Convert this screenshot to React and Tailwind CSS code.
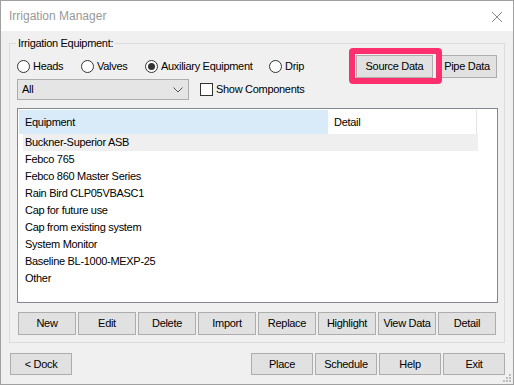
import React from 'react';

const Btn = ({ children, className = '' }) => (
  <button className={`flex items-center justify-center border border-[#adadad] bg-[#e1e1e1] text-black ${className}`}>
    {children}
  </button>
);

const Radio = ({ label, checked, className = '' }) => (
  <label className={`flex items-center ${className}`}>
    <span className="w-[13px] h-[13px] rounded-full border border-[#333] bg-white flex items-center justify-center">
      {checked && <span className="w-[7px] h-[7px] rounded-full bg-[#333]" />}
    </span>
    <span className="ml-[3px]">{label}</span>
  </label>
);

const rows = [
  'Buckner-Superior ASB',
  'Febco 765',
  'Febco 860 Master Series',
  'Rain Bird CLP05VBASC1',
  'Cap for future use',
  'Cap from existing system',
  'System Monitor',
  'Baseline BL-1000-MEXP-25',
  'Other',
];

const actions = ['New', 'Edit', 'Delete', 'Import', 'Replace', 'Highlight', 'View Data', 'Detail'];

export default function App() {
  return (
    <div className="w-[514px] h-[385px] border border-[#a0a0a0] bg-[#f0f0f0] flex flex-col relative font-['Liberation_Sans',Arial,sans-serif] text-[11px] tracking-[-0.3px] text-black">
      {/* title bar */}
      <div className="h-[30px] bg-white flex items-center justify-between pl-[8px] pr-[10px]">
        <span className="text-[12px] tracking-normal text-[#999]">Irrigation Manager</span>
        <svg width="12" height="12" viewBox="0 0 12 12" className="mt-[1px]">
          <path d="M1 1 L11 11 M11 1 L1 11" stroke="#8a8a8a" strokeWidth="1" />
        </svg>
      </div>

      {/* group box */}
      <div className="mt-[12px] ml-[8px] w-[496px] h-[300px] border border-[#dcdcdc] relative">
        <span className="absolute -top-[8px] left-[6px] px-[2px] bg-[#f0f0f0] leading-[14px]">Irrigation Equipment:</span>

        <div className="pt-[10px] pl-[7px] pr-[7px] flex items-start">
          <div className="flex flex-col">
            <div className="h-[24px] flex items-center">
              <Radio label="Heads" className="w-[64px]" />
              <Radio label="Valves" className="w-[64px]" />
              <Radio label="Auxiliary Equipment" checked className="w-[124px]" />
              <Radio label="Drip" />
            </div>
            <div className="mt-[1px] flex items-center">
              <div className="w-[172px] h-[21px] border border-[#adadad] bg-[#e5e5e5] flex items-center justify-between pl-[4px] pr-[5px]">
                <span>All</span>
                <svg width="10" height="6" viewBox="0 0 10 6">
                  <path d="M0.5 0.5 L5 5 L9.5 0.5" stroke="#555" fill="none" strokeWidth="1" />
                </svg>
              </div>
              <label className="ml-[11px] flex items-center">
                <span className="w-[13px] h-[13px] border border-[#333] bg-white" />
                <span className="ml-[3px]">Show Components</span>
              </label>
            </div>
          </div>

          <div className="ml-auto flex items-start gap-[4px] pt-[1px]">
            <div className="relative">
              <Btn className="w-[77px] h-[23px]">Source Data</Btn>
              <span className="absolute -left-[7px] -top-[7px] -right-[9px] -bottom-[6px] border-[6px] border-[#fe2f6e] rounded-[4px]" />
            </div>
            <Btn className="w-[60px] h-[23px]">Pipe Data</Btn>
          </div>
        </div>

        {/* list */}
        <div className="mt-[8px] ml-[7px] w-[481px] h-[195px] border border-[#828790] bg-white p-[1px]">
          <div className="h-[24px] flex">
            <div className="w-[309px] bg-[#d9ebf9] flex items-center pl-[6px]">Equipment</div>
            <div className="w-[149px] flex items-center pl-[6px] border-r border-[#e5e5e5]">Detail</div>
          </div>
          <div className="flex flex-col pl-[4px] w-[459px]">
            {rows.map((r, i) => (
              <div key={r} className={`h-[17px] flex items-center pl-[2px] ${i === 0 ? 'bg-[#efefef]' : ''}`}>
                {r}
              </div>
            ))}
          </div>
        </div>

        {/* action buttons */}
        <div className="mt-[9px] ml-[8px] flex gap-[2px]">
          {actions.map((a) => (
            <Btn key={a} className="w-[58px] h-[23px]">{a}</Btn>
          ))}
        </div>
      </div>

      {/* bottom row */}
      <div className="mt-[10px] pl-[9px] pr-[8px] flex">
        <Btn className="w-[62px] h-[22px]">&lt; Dock</Btn>
        <div className="ml-auto flex gap-[2px]">
          {['Place', 'Schedule', 'Help', 'Exit'].map((b) => (
            <Btn key={b} className="w-[62px] h-[22px]">{b}</Btn>
          ))}
        </div>
      </div>

      {/* resize grip */}
      <svg width="10" height="10" viewBox="0 0 10 10" className="absolute right-[2px] bottom-[2px]">
        <rect x="8" y="2" width="2" height="2" fill="#bcbcbc" />
        <rect x="5" y="5" width="2" height="2" fill="#bcbcbc" />
        <rect x="8" y="5" width="2" height="2" fill="#bcbcbc" />
        <rect x="2" y="8" width="2" height="2" fill="#bcbcbc" />
        <rect x="5" y="8" width="2" height="2" fill="#bcbcbc" />
        <rect x="8" y="8" width="2" height="2" fill="#bcbcbc" />
      </svg>
    </div>
  );
}
